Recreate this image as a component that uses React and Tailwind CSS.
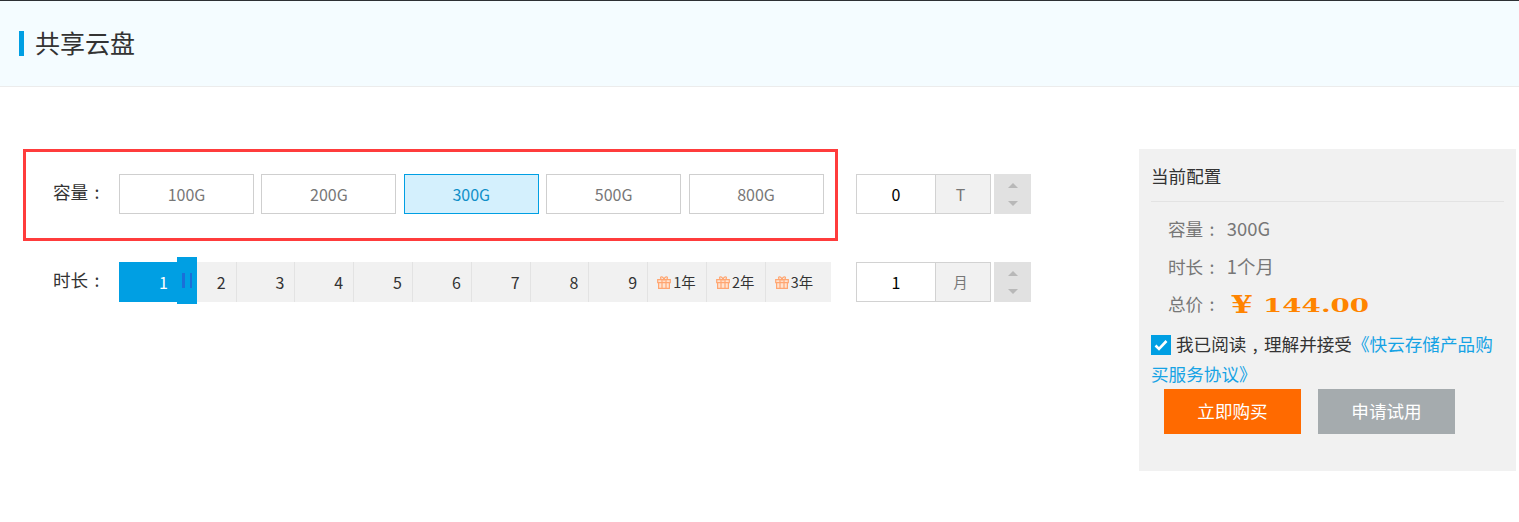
const sizes = ["100G", "200G", "300G", "500G", "800G"];
const months = ["1", "2", "3", "4", "5", "6", "7", "8", "9"];
const years = ["1年", "2年", "3年"];

function Gift() {
  return (
    <svg width="14" height="13" viewBox="0 0 14 13" fill="none" stroke="#ffa672" strokeWidth="1.2" className="shrink-0">
      <path fill="#ffe3d0" d="M.7 3.6h12.6v3H.7zM1.6 6.6v5.8h10.8V6.6z" />
      <path d="M5 3.6v8.8M9 3.6v8.8M5 3.6C3.4 3.2 3 1 4.4.8 5.6.7 6.6 2.2 7 3.6c.4-1.4 1.4-2.9 2.6-2.8C11 1 10.600 3.200 9 3.600" />
    </svg>
  );
}

function Colon() {
  return <span className="inline-block w-[17.6px] text-center">:</span>;
}

function Comma() {
  return <span className="inline-block w-[17.6px] text-center">,</span>;
}

function Stepper({ value, unit, unitSize }) {
  return (
    <div className="flex h-10">
      <div className="flex w-[79px] items-center justify-center border border-r-0 border-[#d2d2d2] text-base text-black">{value}</div>
      <div className={"flex w-[56px] items-center justify-center border border-[#d2d2d2] bg-[#f1f1f1] pr-[5px] text-[#777] " + unitSize}>{unit}</div>
      <div className="ml-[3px] flex w-[37px] flex-col items-center justify-center gap-[13px] bg-[#e1e1e1]">
        <div className="h-0 w-0 border-x-[5.5px] border-b-[5px] border-x-transparent border-b-[#b8b8b8]" />
        <div className="h-0 w-0 border-x-[5.5px] border-t-[5px] border-x-transparent border-t-[#b8b8b8]" />
      </div>
    </div>
  );
}

function Row({ label, value }) {
  return (
    <div className="flex h-[38px] items-center text-[17.6px] text-[#777]">
      <span>{label}</span>
      <Colon />
      <span className="ml-[6px] text-[18.4px]">{value}</span>
    </div>
  );
}

export default function App() {
  return (
    <div className="h-[522px] overflow-hidden bg-white font-['Noto_Sans_CJK_SC',sans-serif] text-[#333]">
      <header className="flex h-[87px] items-center border-t border-b border-t-[#2c3034] border-b-[#ececec] bg-[#f4fcff] pl-[19px]">
        <div className="h-[25px] w-[5px] bg-[#009fe3]" />
        <h1 className="mb-[2px] ml-[11px] text-[25px] leading-none">共享云盘</h1>
      </header>

      <main className="flex pt-[62px] pl-[23px]">
        <div className="w-[1116px] shrink-0">
          <div className="flex items-start">
            <div className="flex h-[92px] w-[815px] items-start border-[3px] border-[#ff3c3c] pt-[22px] pl-[27px]">
              <div className="flex h-10 w-[66px] items-center pb-[3px] text-[17.6px]">容量<Colon /></div>
              <div className="flex gap-[7.4px]">
                {sizes.map((s) => (
                  <div
                    key={s}
                    className={
                      s === "300G"
                        ? "flex h-10 w-[135px] items-center justify-center border border-[#009fe3] bg-[#d4f0fd] text-base text-[#0f8fc8]"
                        : "flex h-10 w-[135px] items-center justify-center border border-[#cfcfcf] text-base text-[#777]"
                    }
                  >
                    {s}
                  </div>
                ))}
              </div>
            </div>
            <div className="mt-[25px] ml-[18px]">
              <Stepper value="0" unit="T" unitSize="text-base" />
            </div>
          </div>

          <div className="mt-[21px] flex items-start pl-[30px]">
            <div className="flex h-10 w-[66px] items-center pb-[3px] text-[17.6px]">时长<Colon /></div>
            <div className="relative grid h-10 w-[712px] grid-cols-[repeat(11,58.8px)_1fr] bg-[#f1f1f1]">
              {months.map((m, i) => (
                <div
                  key={m}
                  className={
                    i === 0
                      ? "flex items-center justify-end bg-[#009fe3] pr-[10px] text-base text-white"
                      : "flex items-center justify-end border-r border-[#e3e3e3] pr-[10px] text-base"
                  }
                >
                  {m}
                </div>
              ))}
              {years.map((y, i) => (
                <div
                  key={y}
                  className={
                    i === 2
                      ? "flex items-center gap-[2px] pl-[9px] text-[14.4px]"
                      : "flex items-center gap-[2px] border-r border-[#e3e3e3] pl-[9px] text-[14.4px]"
                  }
                >
                  <Gift />
                  {y}
                </div>
              ))}
              <div className="absolute top-[-5px] left-[58px] flex h-[47px] w-5 items-center justify-center gap-[5px] bg-[#009fe3]">
                <div className="h-[15px] w-[3px] bg-[#1a6fd8]" />
                <div className="h-[15px] w-[2px] bg-[#1a6fd8]" />
              </div>
            </div>
            <div className="ml-[25px]">
              <Stepper value="1" unit="月" unitSize="text-[14.4px]" />
            </div>
          </div>
        </div>

        <aside className="h-[322px] w-[377px] shrink-0 bg-[#f1f1f1] px-3">
          <div className="flex h-[53px] items-center border-b border-[#e3e3e3] pt-[2px] text-[17.6px]">当前配置</div>
          <div className="mt-2 pl-[17px]">
            <Row label="容量" value="300G" />
            <Row label="时长" value="1个月" />
            <div className="flex h-[38px] items-center text-[17.6px] text-[#777]">
              <span className="mb-[2px]">总价</span>
              <span className="mb-[2px]"><Colon /></span>
              <span className="ml-[10px] inline-block w-[32px] origin-left scale-x-[1.3] font-['DejaVu_Serif',serif] text-[24px] leading-none font-bold text-[#ff8400]">¥</span>
              <span className="inline-block origin-left scale-x-[1.46] font-['DejaVu_Serif',serif] text-[19px] leading-none font-bold whitespace-nowrap text-[#ff8400]">144.00</span>
            </div>
          </div>
          <div className="mt-[5px] text-[17.6px] leading-[30px]">
            <div className="flex items-center whitespace-nowrap">
              <span className="mr-[5px] flex h-5 w-5 translate-y-px items-center justify-center bg-[#009fe3]">
                <svg width="14" height="12" viewBox="0 0 14 12" fill="none" stroke="#fff" strokeWidth="2.6">
                  <path d="M1.5 6.5 5 10l7.5-8" />
                </svg>
              </span>
              <span>我已阅读<Comma />理解并接受</span>
              <span className="text-[#16a3e5]">《快云存储产品购</span>
            </div>
            <div className="text-[#16a3e5]">买服务协议》</div>
          </div>
          <div className="ml-[13px] flex gap-[17px]">
            <div className="flex h-[45px] w-[137px] items-center justify-center bg-[#ff6a00] text-[17.6px] text-white">立即购买</div>
            <div className="flex h-[45px] w-[137px] items-center justify-center bg-[#a5abae] text-[17.6px] text-white">申请试用</div>
          </div>
        </aside>
      </main>
    </div>
  );
}
